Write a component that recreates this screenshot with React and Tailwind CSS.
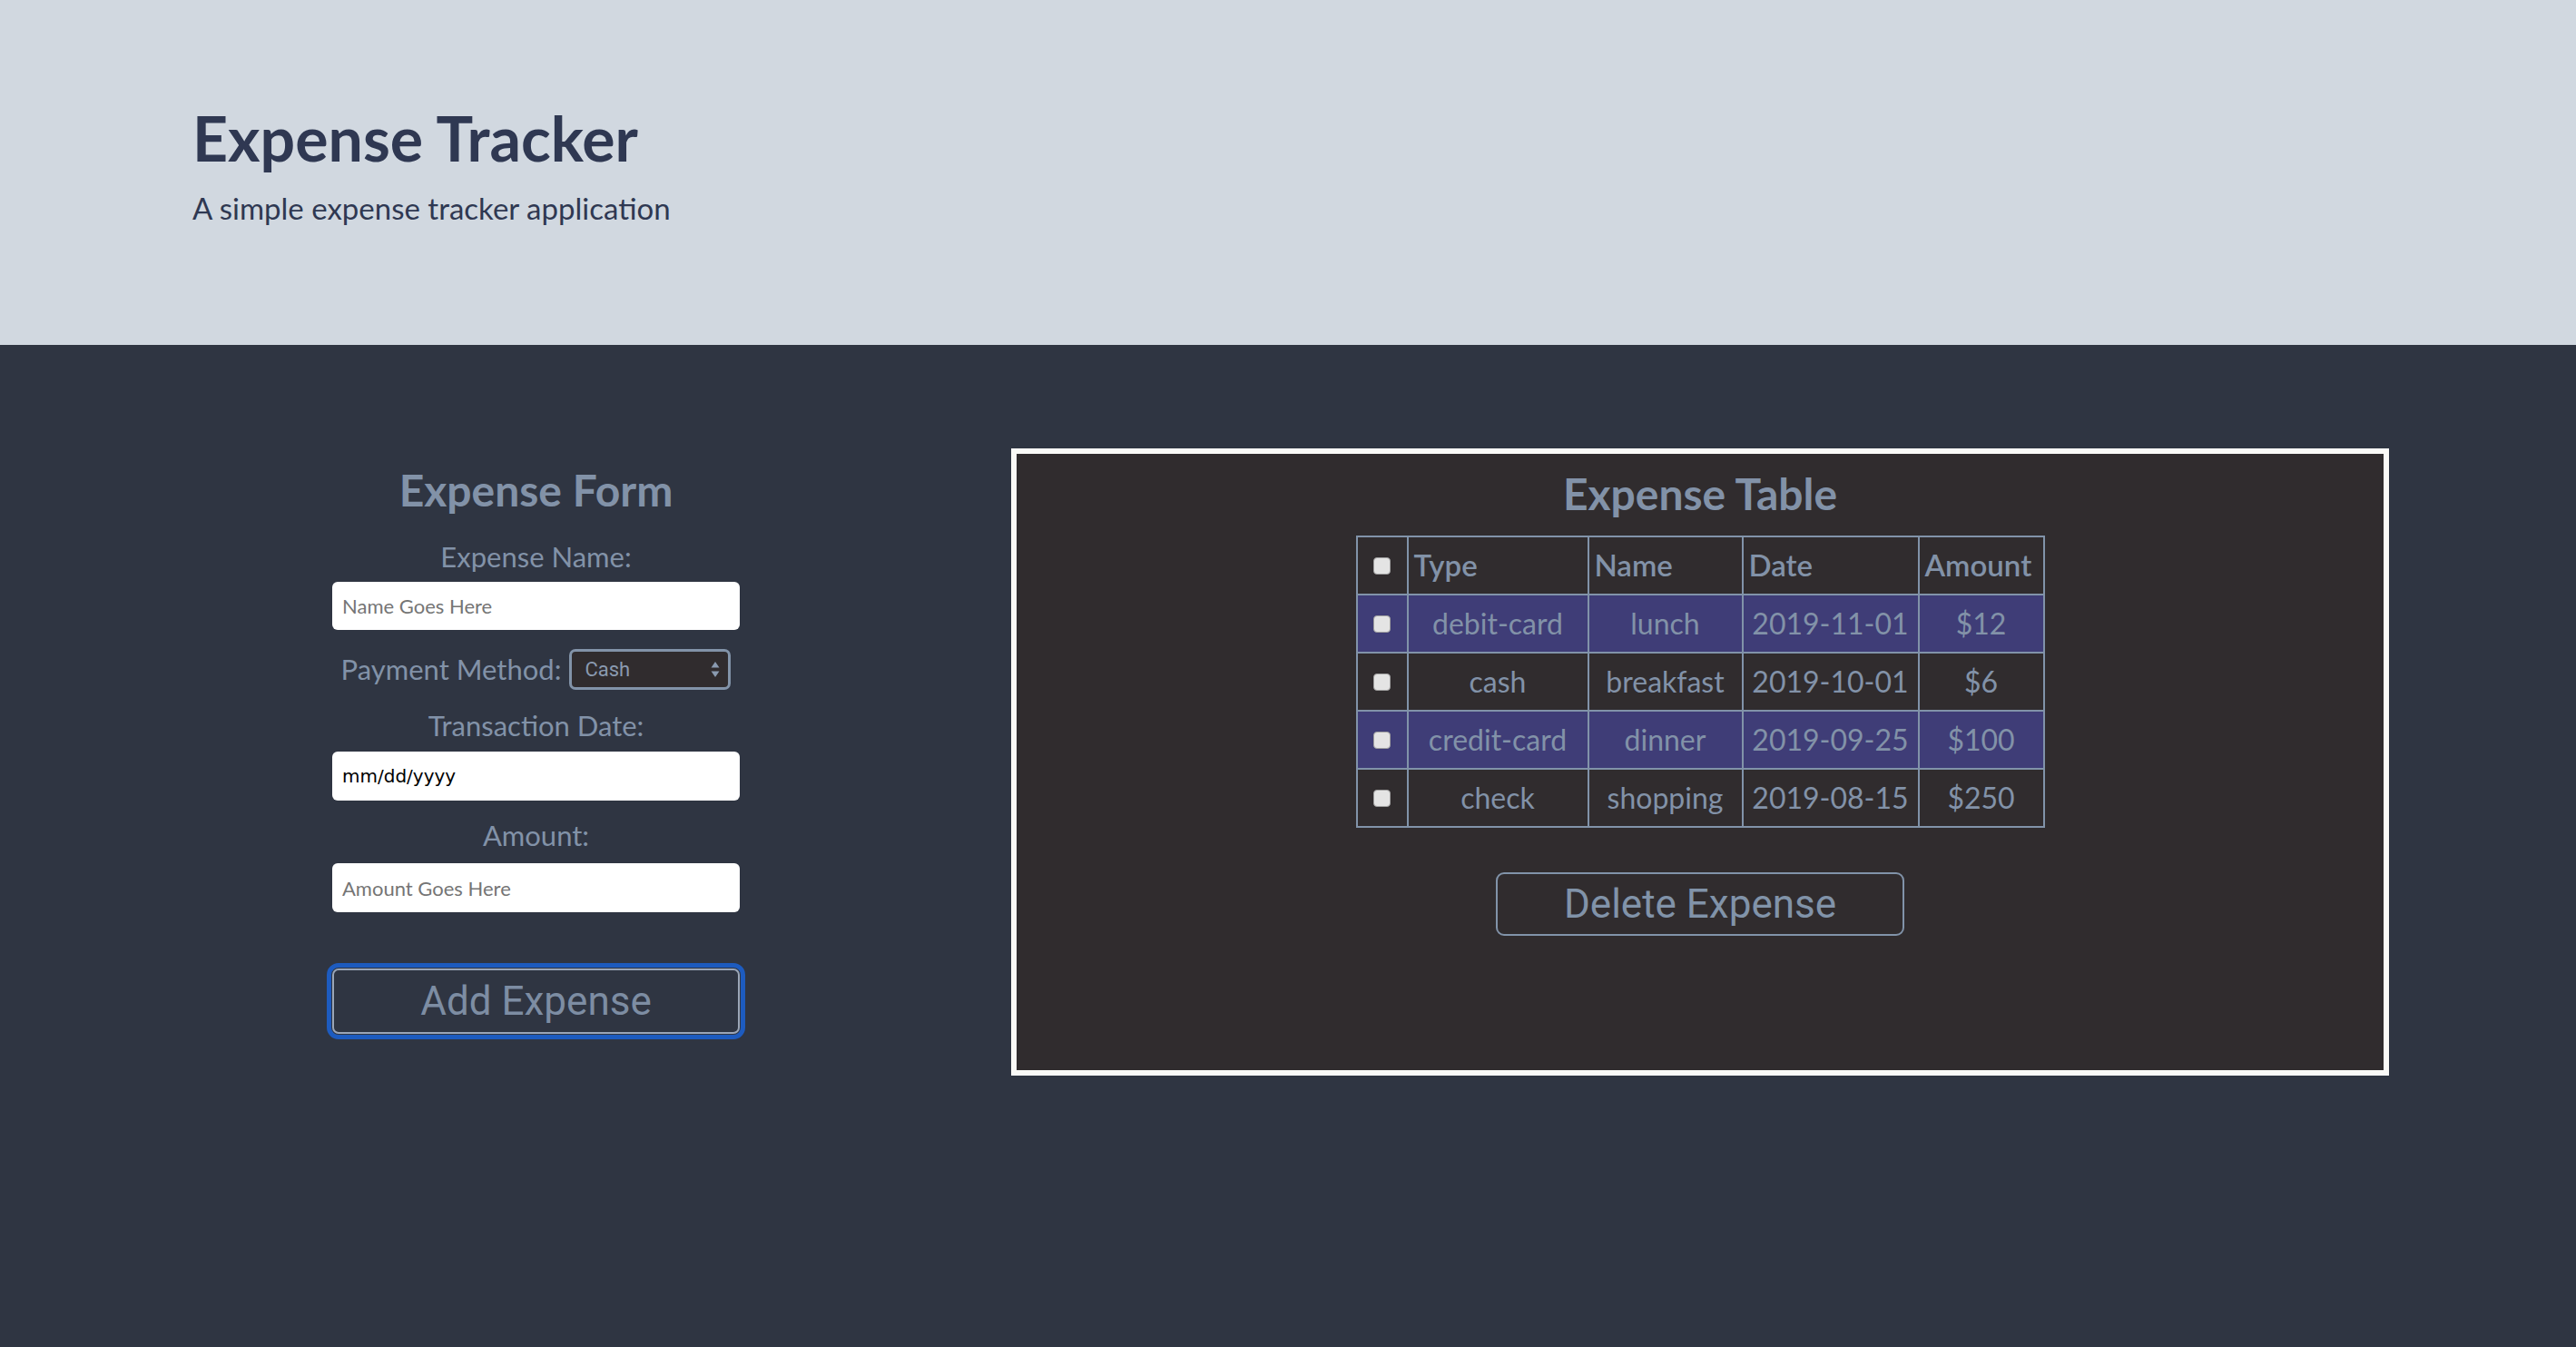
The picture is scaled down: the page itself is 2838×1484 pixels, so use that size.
import { useState } from 'react'

const rows = [
  { id: 1, type: 'debit-card',  name: 'lunch',     date: '2019-11-01', amount: '$12' },
  { id: 2, type: 'cash',        name: 'breakfast', date: '2019-10-01', amount: '$6' },
  { id: 3, type: 'credit-card', name: 'dinner',    date: '2019-09-25', amount: '$100' },
  { id: 4, type: 'check',       name: 'shopping',  date: '2019-08-15', amount: '$250' },
]

function Check() {
  return (
    <input
      type="checkbox"
      className="appearance-none block mx-auto w-[19px] h-[19px] rounded-[4px] border border-[#a0a0a0] bg-[#e4e4e4]"
    />
  )
}

export default function App() {
  const [method, setMethod] = useState('cash')

  return (
    <div className="min-h-screen bg-[#2f3542] font-['Lato','Noto_Sans',sans-serif]">

      {/* Cabeçalho */}
      <header className="h-[380px] bg-[#d1d8e0] pl-[212px] pt-[118px] text-[#2f3852]">
        <h1 className="text-[68px] leading-none font-bold">Expense Tracker</h1>
        <p className="text-[33px] leading-none mt-[27px]">A simple expense tracker application</p>
      </header>

      <main className="flex pl-[366px] pr-[206px] pt-[114px] pb-[300px] gap-[299px] text-[#8292a8]">

        {/* Formulário */}
        <form className="w-[449px] shrink-0 flex flex-col items-center pt-[22px]" onSubmit={e => e.preventDefault()}>
          <h2 className="text-[48px] leading-none font-bold">Expense Form</h2>

          <label className="text-[31px] leading-none mt-[34px]">Expense Name:</label>
          <input
            type="text"
            placeholder="Name Goes Here"
            className="mt-[12px] w-full h-[53px] rounded-[6px] bg-white pl-[11px] text-[22px] placeholder:text-[#757575] outline-none"
          />

          <div className="mt-[21px] flex items-center gap-[9px]">
            <label className="text-[31px] leading-none">Payment Method:</label>
            <div className="relative">
              <select
                value={method}
                onChange={e => setMethod(e.target.value)}
                className="appearance-none w-[178px] h-[45px] rounded-[7px] border-[3px] border-[#8293a8] bg-[#302c2e] pl-[14px] text-[22px] text-[#8a9ab0] font-['Roboto',sans-serif] outline-none"
              >
                <option value="cash">Cash</option>
                <option value="debit-card">Debit Card</option>
                <option value="credit-card">Credit Card</option>
                <option value="check">Check</option>
              </select>
              <svg className="absolute right-[12px] top-[13px] w-[10px] h-[19px] pointer-events-none" viewBox="0 0 10 19" fill="#8a9ab0">
                <path d="M5 1 L9.5 7.5 H0.5 Z" />
                <path d="M5 18 L9.5 11.5 H0.5 Z" />
              </svg>
            </div>
          </div>

          <label className="text-[31px] leading-none mt-[24px]">Transaction Date:</label>
          <input
            type="text"
            placeholder="mm/dd/yyyy"
            className="mt-[13px] w-full h-[54px] rounded-[6px] bg-white pl-[11px] text-[20px] font-['DejaVu_Sans',sans-serif] placeholder:text-black outline-none"
          />

          <label className="text-[31px] leading-none mt-[23px]">Amount:</label>
          <input
            type="text"
            placeholder="Amount Goes Here"
            className="mt-[15px] w-full h-[54px] rounded-[6px] bg-white pl-[11px] text-[22px] placeholder:text-[#757575] outline-none"
          />

          <button
            type="submit"
            className="mt-[62px] w-full h-[72px] rounded-[7px] border-2 border-[#9aa6b8] outline-[5px] outline-solid outline-[#1d5bbf] outline-offset-[1px] text-[44px] text-[#7d8da3] font-['Roboto',sans-serif]"
          >
            Add Expense
          </button>
        </form>

        {/* Tabela */}
        <section className="flex-1 h-[691px] border-[6px] border-[#fafaf7] bg-[#302c2e] flex flex-col items-center pt-[20px]">
          <h2 className="text-[48px] leading-none font-bold">Expense Table</h2>

          <table className="mt-[22px] border-collapse border-2 border-[#8193a9] text-[32px] table-fixed w-[757px]">
            <colgroup>
              <col className="w-[56px]" />
              <col className="w-[199px]" />
              <col className="w-[170px]" />
              <col className="w-[194px]" />
              <col className="w-[138px]" />
            </colgroup>
            <thead>
              <tr className="h-[64px] text-[33px]">
                <th className="border-2 border-[#8193a9]"><Check /></th>
                <th className="border-2 border-[#8193a9] text-left pl-[6px] font-semibold">Type</th>
                <th className="border-2 border-[#8193a9] text-left pl-[6px] font-semibold">Name</th>
                <th className="border-2 border-[#8193a9] text-left pl-[6px] font-semibold">Date</th>
                <th className="border-2 border-[#8193a9] text-left pl-[6px] font-semibold">Amount</th>
              </tr>
            </thead>
            <tbody>
              {rows.map((row, i) => (
                <tr key={row.id} className={`h-[64px] ${i % 2 === 0 ? 'bg-[#3f3d77]' : ''}`}>
                  <td className="border-2 border-[#8193a9]"><Check /></td>
                  <td className="border-2 border-[#8193a9] text-center">{row.type}</td>
                  <td className="border-2 border-[#8193a9] text-center">{row.name}</td>
                  <td className="border-2 border-[#8193a9] text-center">{row.date}</td>
                  <td className="border-2 border-[#8193a9] text-center">{row.amount}</td>
                </tr>
              ))}
            </tbody>
          </table>

          <button className="mt-[49px] w-[450px] h-[70px] rounded-[9px] border-2 border-[#8193a9] text-[44px] text-[#8193a9] font-['Roboto',sans-serif]">
            Delete Expense
          </button>
        </section>

      </main>
    </div>
  )
}
